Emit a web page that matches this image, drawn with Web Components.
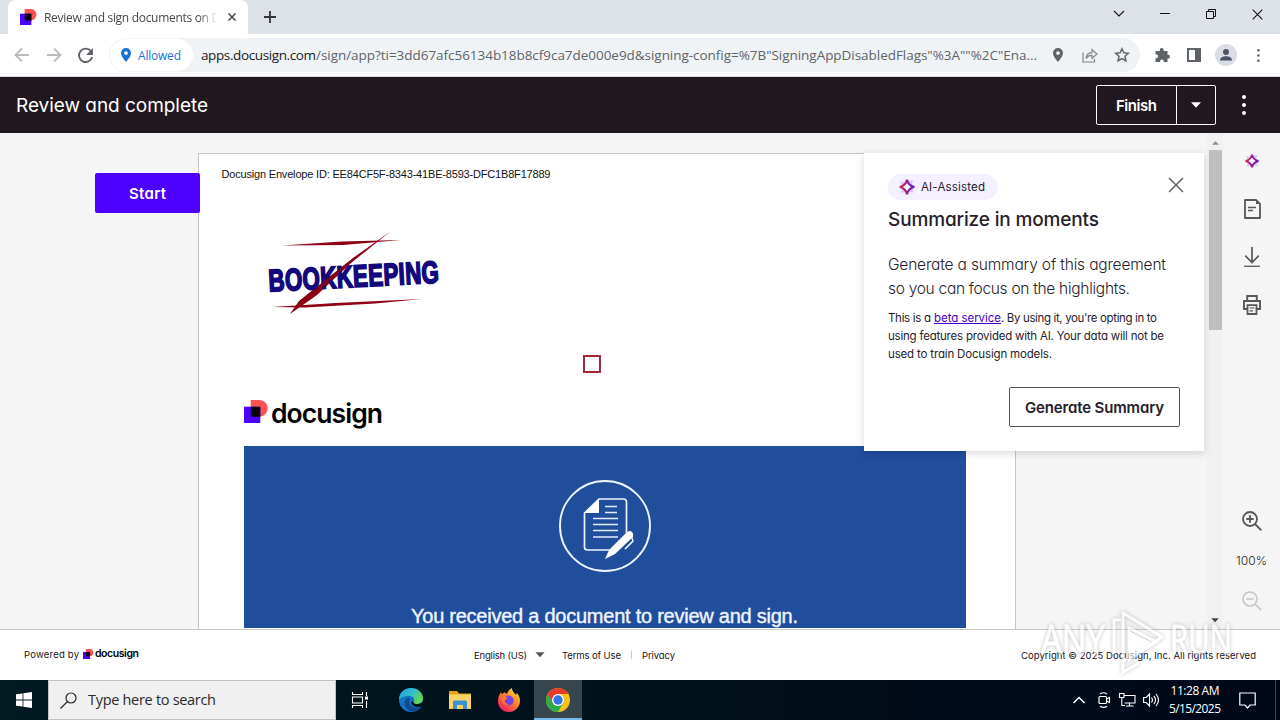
<!DOCTYPE html>
<html lang="en">
<head>
<meta charset="utf-8">
<title>Review and sign documents on Docusign</title>
<style>
    html, body { margin: 0; height: 100%; overflow: hidden; }
    body { font-family: Inter, "Liberation Sans", sans-serif; color: #1f1a20; }
</style>
</head>
<body>
<signing-screen></signing-screen>

<script>
const icons = {
    mark: ['0 0 24 24', `<path d="M7 0h8a8.500 8.500 0 0 1 2 17.300H7z" fill="#ff5252"/><path d="M0 7h17v17H0z" fill="#4c00ff"/><path d="M7 7h10v10.500H9a2 2 0 0 1-2-2z" fill="#0a0010"/>`],
    close: ['0 0 16 16', `<path d="M1 1l14 14M15 1L1 15" stroke="currentColor" stroke-width="var(--stroke,1.6)" fill="none"/>`],
    plus: ['0 0 12 12', `<path d="M6 0v12M0 6h12" stroke="currentColor" stroke-width="1.8"/>`],
    back: ['0 0 16 16', `<path d="M15 8H2M8 1.500L1.500 8 8 14.500" stroke="currentColor" stroke-width="1.8" fill="none"/>`],
    forward: ['0 0 16 16', `<path d="M1 8h13M8 1.500L14.500 8 8 14.500" stroke="currentColor" stroke-width="1.8" fill="none"/>`],
    reload: ['0 0 16 16', `<path d="M13.200 4A6.300 6.300 0 1 0 14.300 9.500" stroke="currentColor" stroke-width="1.8" fill="none"/><path d="M15 1v6.500H8.500z" fill="currentColor"/>`],
    pin: ['0 0 12 16', `<path fill-rule="evenodd" d="M6 1a5 5 0 0 1 5 5c0 3.500-5 9-5 9S1 9.500 1 6a5 5 0 0 1 5-5zm0 3.200a1.900 1.900 0 1 0 0 3.800 1.900 1.900 0 0 0 0-3.800z" fill="currentColor"/>`],
    share: ['0 0 16 16', `<path d="M1 5.500V15h11.500v-3M4 11.500C4.300 7.800 6.500 5.800 10 5.600V2.500L15 7l-5 4.500V8.300c-2.600 0-4.500.9-6 3.200z" stroke="currentColor" stroke-width="1.200" fill="none"/>`],
    star: ['0 0 16 16', `<path d="M8 1.800l1.900 4 4.400.5-3.300 3 .9 4.400L8 11.500l-3.900 2.200.9-4.400-3.300-3 4.400-.5z" stroke="currentColor" stroke-width="1.500" fill="none"/>`],
    puzzle: ['0 0 16 16', `<path d="M1.500 4h4.300V2.900a1.900 1.900 0 0 1 3.800 0V4h3.900v3.800h.6a1.900 1.900 0 0 1 0 3.800h-.6V15H9.700v-.8a1.800 1.800 0 0 0-3.600 0v.8H1.500v-3.800h.8a1.800 1.800 0 0 0 0-3.600h-.8z" fill="currentColor"/>`],
    panel: ['0 0 16 16', `<path fill-rule="evenodd" d="M1 1h14v14H1zm2 2v10h6V3z" fill="currentColor"/>`],
    person: ['0 0 22 22', `<circle cx="11" cy="11" r="11" fill="#dadde6"/><circle cx="11" cy="8" r="3" fill="#4d5467"/><path d="M5 16.500c0-3 3-4.200 6-4.200s6 1.200 6 4.200z" fill="#4d5467"/>`],
    dots: ['0 0 4 20', `<g fill="currentColor"><circle cx="2" cy="2" r="2"/><circle cx="2" cy="10" r="2"/><circle cx="2" cy="18" r="2"/></g>`],
    chevron: ['0 0 12 8', `<path d="M1 1l5 5 5-5" stroke="currentColor" stroke-width="1.100" fill="none"/>`],
    up: ['0 0 12 8', `<path d="M.5 7L6 1.500 11.500 7" stroke="currentColor" stroke-width="1.500" fill="none"/>`],
    dash: ['0 0 10 10', `<path d="M0 4.500h10" stroke="currentColor" stroke-width="1"/>`],
    restore: ['0 0 10 10', `<path d="M.5 2.500h7v7h-7zM2.500 2.500v-2h7v7h-2" stroke="currentColor" fill="none"/>`],
    caret: ['0 0 10 6', `<path d="M0 .3h10L5 5.700z" fill="currentColor"/>`],
    caretUp: ['0 0 10 6', `<path d="M0 5.700h10L5 .3z" fill="currentColor"/>`],
    spark: ['0 0 18 18', `<defs><linearGradient id="g"><stop offset="0" stop-color="#d02a4c"/><stop offset="1" stop-color="#5a16dc"/></linearGradient></defs><path d="M3 3l4 2 4-2 4-1-1 4 1 4 0 5-4-2-4 1-4 1 1-4z" fill="#d9c5f7"/><path d="M9 1.800c1 4.400 2.800 6.200 7.200 7.200-4.400 1-6.200 2.800-7.200 7.200C8 11.800 6.200 10 1.800 9 6.200 8 8 6.200 9 1.800z" stroke="url(#g)" stroke-width="2.200" fill="#fff"/>`],
    page: ['0 0 18 20', `<path d="M13 1H2v18h15V5z" stroke="currentColor" stroke-width="1.800" stroke-linejoin="round" fill="none"/><path d="M13 1v4h4z" fill="currentColor"/><path d="M5 8.500h8M5 11.500h5" stroke="currentColor" stroke-width="1.300"/>`],
    download: ['0 0 18 20', `<path d="M9 0v15M2.200 8.700L9 15.500l6.800-6.800" stroke="currentColor" stroke-width="1.700" fill="none"/><path d="M1 19.300h16" stroke="currentColor" stroke-width="1.300"/>`],
    print: ['0 0 18 20', `<path d="M4.200 5.500V1h9.600v4.500M4 14H1V6h16v8h-3" stroke="currentColor" stroke-width="1.900" fill="none"/><path d="M4.500 10.200h9V19h-9z" stroke="currentColor" stroke-width="1.800" fill="none"/><path d="M6.500 13h5M6.500 15.800h3.500" stroke="currentColor" stroke-width="1.200"/>`],
    zoomIn: ['0 0 20 20', `<circle cx="8" cy="8" r="7" stroke="currentColor" stroke-width="1.800" fill="none"/><path d="M13 13l6.300 6.300M4.300 8h7.400M8 4.300v7.400" stroke="currentColor" stroke-width="1.800"/>`],
    zoomOut: ['0 0 20 20', `<circle cx="8" cy="8" r="7" stroke="currentColor" stroke-width="1.600" fill="none"/><path d="M13 13l6.300 6.300M4.300 8h7.400" stroke="currentColor" stroke-width="1.600"/>`],
    bookkeeping: ['0 0 180 92', `<path d="M17 16.500L77 12.500l59-1.500-58 5z" fill="#8c0012"/><path d="M126 2L86 34 52 66 25 85l9-13L88 29z" fill="#8c0012"/><path d="M7 78l64-4 86-4-47 4.500-70 4z" fill="#8c0012"/><text transform="translate(4 62.500) rotate(-3) scale(.72 1)" textLength="237" font-family="'Liberation Sans'" font-weight="700" font-size="31" fill="#12077c" stroke="#12077c" stroke-width="1.800">BOOKKEEPING</text><path d="M94 25L54 62 37 75l23-24 13-10z" fill="#8c0012" opacity=".75"/>`],
    signDoc: ['0 0 92 92', `<circle cx="46" cy="46" r="45" stroke="#eef4ff" stroke-width="1.900" fill="none"/><path d="M52 70H28.500A3 3 0 0 1 25.500 67V33L40 19h24.500A3 3 0 0 1 67.500 22v31" stroke="#eef4ff" stroke-width="1.700" fill="none"/><path d="M26 33L40 19v14z" fill="#fff"/><path d="M46 26.500h12M46 32.500h12M34 38.500h25M34 44.500h25M34 50.500h25M34 57h25" stroke="#e4edff" stroke-width="1.500"/><path d="M46 79l4-9 18-18q3-2 5 0t1 5L56 74z" fill="#fff"/><path d="M66 69l8-8-1-3" stroke="#fff" stroke-width="1.500" fill="none"/>`],
    windows: ['0 0 16 16', `<path d="M0 2.300L6.600 1.400v6.200H0zM7.400 1.300L16 0v7.600H7.400zM0 8.400h6.600v6.200L0 13.700zM7.400 8.400H16V16l-8.600-1.300z" fill="#fff"/>`],
    search: ['0 0 17 17', `<circle cx="11" cy="6" r="5" stroke="currentColor" stroke-width="1.200" fill="none"/><path d="M7.500 9.500L.5 16.500" stroke="currentColor" stroke-width="1.300"/>`],
    taskview: ['0 0 16 16', `<path d="M.5 0v2.500h10V0M.5 16v-2.500h10V16M.5 5h10v6H.5zM14.500 0v4M14.500 9v7" stroke="#fff" fill="none" stroke-width="1.100"/><path d="M13 4.500h3v3h-3z" fill="#fff"/>`],
    edge: ['0 0 24 24', `<defs><linearGradient id="a" x2="1" y2=".5"><stop stop-color="#1d9de8"/><stop offset=".6" stop-color="#35c1c6"/><stop offset="1" stop-color="#68d64f"/></linearGradient></defs><circle cx="12" cy="12" r="12" fill="#1272c8"/><path d="M0 12C0 4 6 0 12 0c7 0 12 5 12 10 0 4-3 6-6 6-4 0-4-2-3-3 1-2-1-5-5-5C5 8 1 10 0 12z" fill="url(#a)"/><path d="M8.500 10C3 13 6 23 14 23.800 18 23.500 21 21 22.500 18.500 17 21 10 19 10 14c0-1.500.4-2.700 1.300-3.400z" fill="#114a8b"/><path d="M15 13c-1 1-1 3 3 3 3 0 5-1 6-3l1 4-2.500 1.500C18 20 12 18 12 14z" fill="#001419"/>`],
    folder: ['0 0 22 20', `<path d="M0 1h8l2 2.500h12V18H0z" fill="#eaa01d"/><path d="M0 4.500h22V19H0z" fill="#fbd467"/><path d="M4 19v-7q0-1.500 1.500-1.500h11q1.500 0 1.500 1.500v7h-4v-4H8v4z" fill="#3a92d2"/>`],
    firefox: ['0 0 24 24', `<defs><linearGradient id="a" x1="1" x2=".3" y2="1"><stop stop-color="#fff44f"/><stop offset=".45" stop-color="#ff9226"/><stop offset="1" stop-color="#f01d62"/></linearGradient></defs><path d="M12 24C5 24 1 19 1 13c0-4 1.500-7 3-9l1 2.500C6 5 7 4.500 8 4.500L10 6c1-3 3-5 5-6-.2 3 2 4 3 6l1.500 1V4.500C22 7 23 10 23 13c0 6-5 11-11 11z" fill="url(#a)"/><circle cx="11.700" cy="12.500" r="5" fill="#7542e5"/><path d="M5 9c2-1 4 0 6 1l-3 2c-1 2 1 4 4 4-4 3-8-1-7-7z" fill="#ff772b"/>`],
    chrome: ['0 0 24 24', `<circle cx="12" cy="12" r="12" fill="#fbc116"/><path d="M1.600 6A12 12 0 0 0 12 24l5.200-9L12 12 6.800 15z" fill="#2da94f"/><path d="M12 6h10.400a12 12 0 0 0-20.800 0l5.200 9z" fill="#e33b2e"/><circle cx="12" cy="12" r="6" fill="#fff"/><circle cx="12" cy="12" r="4.700" fill="#3076eb"/>`],
    camera: ['0 0 14 16', `<g stroke="#fff" fill="none" stroke-width="1.200"><rect x="2" y="4.500" width="7.500" height="7" rx="1"/><path d="M9.500 7l3-1.500v5l-3-1.500M3 2q3.500-2.500 7 0M3 14.200q3.500 2.500 7 0"/></g>`],
    network: ['0 0 17 16', `<g stroke="#fff" fill="none" stroke-width="1.100"><path d="M5.500 3.500H16v7.500H5.500M10.500 11v3M7 14h7.500M.5 1.500h4.500v4H.5zM2.800 5.500v8H6"/></g>`],
    volume: ['0 0 17 16', `<g stroke="#fff" fill="none" stroke-width="1.100"><path d="M.6 5.500h2.600L6.500 2v12L3.200 10.500H.6zM8.500 5.500q2 2.500 0 5M10.800 3.800q3.500 4.200 0 8.400M13 2q5 6 0 12"/></g>`],
    notice: ['0 0 17 17', `<path d="M.8 1h15.400v12H11l-2.500 3L6 13H.8z" stroke="#fff" fill="none" stroke-width="1.200"/>`]
};

class UiIcon extends HTMLElement {
    connectedCallback() {
        const [box, body] = icons[this.getAttribute('name')];
        const w = this.getAttribute('w');
        const h = this.getAttribute('h') || w;
        this.attachShadow({ mode: 'open' }).innerHTML = `
            <style>
                :host { display: block; flex: none; }
                svg { display: block; overflow: visible; }
            </style>
            <svg width="${w}" height="${h}" viewBox="${box}">${body}</svg>
        `;
    }
}

// One line of text, tracked out (or in) so that it spans the given width.
class FitText extends HTMLElement {
    connectedCallback() {
        this.attachShadow({ mode: 'open' }).innerHTML = `
            <style>
                :host { display: flex; flex: none; }
                span { flex: none; white-space: pre; }
            </style>
            <span><slot></slot></span>
        `;
        const width = Number(this.getAttribute('w'));
        const span = this.shadowRoot.querySelector('span');
        const natural = span.getBoundingClientRect().width;
        const count = this.textContent.length - 1;
        span.style.letterSpacing = (width - natural) / count + 'px';
        this.style.width = width + 'px';
    }
}

class BrowserChrome extends HTMLElement {
    connectedCallback() {
        this.attachShadow({ mode: 'open' }).innerHTML = `
            <style>
                :host { display: block; height: 77px; font: 12px "Open Sans", "Noto Sans", sans-serif; color: #5f6368; }
                .tabs { height: 34px; background: #dde1e8; display: flex; align-items: center; box-sizing: border-box; padding-left: 8px; }
                .tab { width: 240px; height: 34px; background: #fff; border-radius: 8px 8px 0 0; display: flex; align-items: center; box-sizing: border-box; padding: 0 12px; color: #45484c; }
                .title { width: 172px; margin: 0 12px 0 8px; overflow: hidden; -webkit-mask: linear-gradient(90deg, #000 155px, transparent 174px); mask: linear-gradient(90deg, #000 155px, transparent 174px); }
                .win { margin-left: auto; display: flex; align-items: center; padding-right: 17px; color: #111; }
                .bar { height: 43px; background: #fff; border-bottom: 1px solid #d8dadd; box-sizing: border-box; display: flex; align-items: center; padding-left: 14px; }
                .omni { width: 1031px; height: 34px; margin-left: 15px; border-radius: 17px; background: #f0f3f5; display: flex; align-items: center; font-size: 13.500px; }
                .allowed { width: 83px; height: 32px; border-radius: 16px; background: #fff; margin-left: 1px; display: flex; align-items: center; color: #1a6fd6; font-size: 12px; box-sizing: border-box; padding-left: 10px; gap: 6px; }
                .host { color: #202124; margin-left: 8px; }
            </style>
            <div class="tabs">
                <div class="tab">
                    <ui-icon name="mark" w="16"></ui-icon>
                    <div class="title"><fit-text w="217">Review and sign documents on Docusign</fit-text></div>
                    <ui-icon name="close" w="8" style="--stroke:3"></ui-icon>
                </div>
                <ui-icon name="plus" w="12" style="margin-left:16px;color:#333"></ui-icon>
                <div class="win" style="margin-top:-6px">
                    <ui-icon name="chevron" w="12" h="8" style="margin-right:35px"></ui-icon>
                    <ui-icon name="dash" w="10" style="margin-right:36px"></ui-icon>
                    <ui-icon name="restore" w="10" style="margin-right:36px"></ui-icon>
                    <ui-icon name="close" w="11"></ui-icon>
                </div>
            </div>
            <div class="bar">
                <ui-icon name="back" w="16" style="color:#b9bbbe"></ui-icon>
                <ui-icon name="forward" w="16" style="color:#b9bbbe;margin-left:16px"></ui-icon>
                <ui-icon name="reload" w="17" style="margin-left:15px"></ui-icon>
                <div class="omni">
                    <div class="allowed"><ui-icon name="pin" w="12" h="16"></ui-icon><fit-text w="43">Allowed</fit-text></div>
                    <fit-text class="host" w="115">apps.docusign.com</fit-text>
                    <fit-text w="721">/sign/app?ti=3dd67afc56134b18b8cf9ca7de000e9d&amp;signing-config=%7B"SigningAppDisabledFlags"%3A""%2C"Ena...</fit-text>
                    <ui-icon name="pin" w="12" h="16" style="margin-left:15px"></ui-icon>
                    <ui-icon name="share" w="16" style="margin-left:18px;color:#808488"></ui-icon>
                    <ui-icon name="star" w="16" style="margin-left:16px"></ui-icon>
                </div>
                <ui-icon name="puzzle" w="16" style="margin-left:14px"></ui-icon>
                <ui-icon name="panel" w="16" style="margin-left:16px"></ui-icon>
                <ui-icon name="person" w="22" style="margin-left:13px"></ui-icon>
                <ui-icon name="dots" w="2.800" h="13" style="margin-left:20px"></ui-icon>
            </div>
        `;
    }
}

class AppHeader extends HTMLElement {
    connectedCallback() {
        this.attachShadow({ mode: 'open' }).innerHTML = `
            <style>
                :host { display: flex; height: 56px; background: #21171e; color: #fff; align-items: center; padding: 0 34px 0 16px; font-size: 19px; }
                .finish { margin-left: auto; display: flex; width: 118px; height: 38px; border: 1px solid #fff; border-radius: 2px; align-items: center; font-size: 15px; font-weight: 600; }
                .label { width: 79px; display: flex; justify-content: center; }
                .arrow { width: 38px; height: 38px; border-left: 1px solid #fff; display: flex; align-items: center; justify-content: center; }
            </style>
            <fit-text w="192">Review and complete</fit-text>
            <div class="finish">
                <div class="label"><fit-text w="41">Finish</fit-text></div>
                <div class="arrow"><ui-icon name="caret" w="10" h="6"></ui-icon></div>
            </div>
            <ui-icon name="dots" w="4" h="20" style="margin-left:26px"></ui-icon>
        `;
    }
}

class DocumentPage extends HTMLElement {
    connectedCallback() {
        this.attachShadow({ mode: 'open' }).innerHTML = `
            <style>
                :host { display: flex; flex-direction: column; align-items: flex-start; width: 816px; height: 475px; margin-top: 20px; background: #fff; border: 1px solid #c6c6c6; border-bottom: 0; }
                .envelope { font: 11px/14px "Liberation Sans", sans-serif; color: #111; margin: 13px 0 0 22.500px; }
                .check { flex: none; width: 14px; height: 14px; border: 2px solid #a02638; margin: 34px 0 0 384px; }
                .brand { flex: none; display: flex; margin: 27px 0 0 45px; height: 46px; gap: 4px; color: #000; font-weight: 600; font-size: 26.500px; line-height: 27px; }
                .banner { flex: none; width: 722px; height: 182px; background: #204e9c; margin-left: 45px; display: flex; flex-direction: column; align-items: center; color: #eef4ff; font: 20px/24px "Liberation Sans", sans-serif; -webkit-text-stroke: .4px #eef4ff; }
            </style>
            <fit-text class="envelope" w="329">Docusign Envelope ID: EE84CF5F-8343-41BE-8593-DFC1B8F17889</fit-text>
            <ui-icon name="bookkeeping" w="180" h="92" style="margin:48px 0 0 66px"></ui-icon>
            <div class="check"></div>
            <div class="brand"><ui-icon name="mark" w="23"></ui-icon><fit-text w="112">docusign</fit-text></div>
            <div class="banner">
                <ui-icon name="signDoc" w="92" style="margin:34px 0 32px"></ui-icon>
                <fit-text w="387" style="margin-right:1px">You received a document to review and sign.</fit-text>
            </div>
        `;
    }
}

class SummaryCard extends HTMLElement {
    connectedCallback() {
        this.attachShadow({ mode: 'open' }).innerHTML = `
            <style>
                :host { display: block; box-sizing: border-box; width: 340px; height: 298px; padding: 21px 24px 24px; background: #fff; box-shadow: 0 2px 8px rgba(0, 0, 0, .16); color: #26212a; }
                .top { display: flex; justify-content: space-between; height: 26px; }
                .chip { display: flex; align-items: center; width: 110px; height: 26px; box-sizing: border-box; padding-left: 10px; gap: 5px; border-radius: 13px; background: #f5f0ff; font-size: 11.500px; }
                h2 { margin: 8px 0 21px; font-size: 19px; line-height: 24px; font-weight: 500; }
                .lead { font-size: 15.500px; line-height: 24px; font-weight: 300; }
                .note { font-size: 11.500px; line-height: 18px; margin-top: 8px; }
                .row { display: flex; }
                a { color: #4b00c8; text-decoration: underline; }
                .generate { width: 169px; height: 38px; border: 1px solid #55505a; border-radius: 2px; margin: 24px 0 0 auto; display: flex; align-items: center; justify-content: center; font-size: 15px; font-weight: 600; }
            </style>
            <div class="top">
                <div class="chip"><ui-icon name="spark" w="18"></ui-icon><fit-text w="64">AI-Assisted</fit-text></div>
                <ui-icon name="close" w="16" style="margin:3px -4px 0 0;color:#666"></ui-icon>
            </div>
            <h2><fit-text w="211">Summarize in moments</fit-text></h2>
            <div class="lead">
                <fit-text w="278">Generate a summary of this agreement</fit-text>
                <fit-text w="242">so you can focus on the highlights.</fit-text>
            </div>
            <div class="note">
                <div class="row"><fit-text w="46">This is a </fit-text><a><fit-text w="67">beta service</fit-text></a><fit-text w="156">. By using it, you're opting in to</fit-text></div>
                <fit-text w="276">using features provided with AI. Your data will not be</fit-text>
                <fit-text w="164">used to train Docusign models.</fit-text>
            </div>
            <div class="generate"><fit-text w="139">Generate Summary</fit-text></div>
        `;
    }
}

class DocumentArea extends HTMLElement {
    connectedCallback() {
        this.attachShadow({ mode: 'open' }).innerHTML = `
            <style>
                :host { display: flex; position: relative; height: 496px; background: #f5f5f5; overflow: hidden; }
                .gutter { width: 198px; flex: none; }
                .start { position: relative; z-index: 1; width: 105px; height: 40px; margin: 40px 0 0 95px; background: #4c00ff; border-radius: 2px; color: #fff; display: flex; align-items: center; justify-content: center; font-size: 15px; font-weight: 600; }
                .scroll { width: 16px; margin-left: auto; background: #f1f1f1; display: flex; flex-direction: column; align-items: center; color: #8a8a8a; }
                .thumb { width: 13px; height: 180px; background: #bfbfbf; margin-top: 5px; }
                .side { width: 57px; display: flex; flex-direction: column; align-items: center; color: #595559; font-size: 12px; box-sizing: border-box; padding-top: 20px; }
                summary-card { position: absolute; left: 864px; top: 20px; }
            </style>
            <div class="gutter"><div class="start"><fit-text w="37">Start</fit-text></div></div>
            <document-page></document-page>
            <div class="scroll">
                <ui-icon name="caretUp" w="7" h="4" style="margin-top:8px"></ui-icon>
                <div class="thumb"></div>
                <ui-icon name="caret" w="8" h="4.500" style="margin:auto 0 7px;color:#444"></ui-icon>
            </div>
            <div class="side">
                <ui-icon name="spark" w="16"></ui-icon>
                <ui-icon name="page" w="18" h="20" style="margin-top:30px"></ui-icon>
                <ui-icon name="download" w="18" h="20" style="margin-top:28px"></ui-icon>
                <ui-icon name="print" w="18" h="20" style="margin-top:28px"></ui-icon>
                <ui-icon name="zoomIn" w="20" style="margin-top:196px"></ui-icon>
                <fit-text w="31" style="margin:22px 0;font-weight:300;line-height:16px;color:#222">100%</fit-text>
                <ui-icon name="zoomOut" w="20" style="color:#c6c4c6"></ui-icon>
            </div>
            <summary-card></summary-card>
        `;
    }
}

class PageFooter extends HTMLElement {
    connectedCallback() {
        this.attachShadow({ mode: 'open' }).innerHTML = `
            <style>
                :host { display: flex; box-sizing: border-box; height: 51px; border-top: 1px solid #c9c9cb; background: #fff; align-items: center; padding: 0 24px; font-size: 9.500px; color: #19141c; }
                .brand { display: flex; align-items: center; gap: 2px; margin: -3px 0 0 4px; font-weight: 600; font-size: 10.500px; color: #000; }
                i { width: 1px; height: 8px; background: #ccc; margin: 0 10px; }
            </style>
            <fit-text w="55" style="margin-top:-2px">Powered by</fit-text>
            <div class="brand"><ui-icon name="mark" w="10"></ui-icon><fit-text w="44">docusign</fit-text></div>
            <fit-text w="53" style="margin-left:335px">English (US)</fit-text>
            <ui-icon name="caret" w="10" h="5.500" style="margin:0 17px 0 8px;color:#555"></ui-icon>
            <fit-text w="59">Terms of Use</fit-text><i></i><fit-text w="33">Privacy</fit-text>
            <fit-text w="235" style="margin-left:auto">Copyright © 2025 Docusign, Inc. All rights reserved</fit-text>
        `;
    }
}

class TaskBar extends HTMLElement {
    connectedCallback() {
        this.attachShadow({ mode: 'open' }).innerHTML = `
            <style>
                :host { display: flex; height: 40px; background: linear-gradient(90deg, #001a22, #001019 55%, #000719); align-items: center; color: #fff; font: 12px/18px "Open Sans", "Noto Sans", sans-serif; }
                .cell { width: 48px; height: 40px; display: flex; align-items: center; justify-content: center; box-sizing: border-box; }
                .search { width: 288px; height: 40px; box-sizing: border-box; border: 1px solid #c0c2c4; background: #f0f0f0; color: #2a2a2a; display: flex; align-items: center; gap: 11px; padding-left: 11px; font-size: 14.500px; }
                .apps { display: flex; gap: 1px; }
                .active { background: #37464d; border-bottom: 2px solid #76b9ed; padding-top: 2px; }
                .tray { margin-left: auto; display: flex; align-items: center; }
                .clock { width: 52px; margin: 0 18px 0 9px; display: flex; flex-direction: column; align-items: center; }
                .edge { width: 1px; height: 40px; margin: 0 4px 0 19px; background: #3b4554; }
            </style>
            <div class="cell"><ui-icon name="windows" w="16"></ui-icon></div>
            <div class="search"><ui-icon name="search" w="17"></ui-icon><fit-text w="128">Type here to search</fit-text></div>
            <div class="apps">
                <div class="cell" style="margin-right:2px"><ui-icon name="taskview" w="16"></ui-icon></div>
                <div class="cell"><ui-icon name="edge" w="24"></ui-icon></div>
                <div class="cell"><ui-icon name="folder" w="22" h="20"></ui-icon></div>
                <div class="cell"><ui-icon name="firefox" w="24"></ui-icon></div>
                <div class="cell active"><ui-icon name="chrome" w="24"></ui-icon></div>
            </div>
            <div class="tray">
                <ui-icon name="up" w="12" h="8" style="margin-right:12px"></ui-icon>
                <ui-icon name="camera" w="14" h="16" style="margin-right:8px"></ui-icon>
                <ui-icon name="network" w="17" h="16" style="margin-right:7px"></ui-icon>
                <ui-icon name="volume" w="17" h="16"></ui-icon>
                <div class="clock"><fit-text w="49">11:28 AM</fit-text><fit-text w="52">5/15/2025</fit-text></div>
                <ui-icon name="notice" w="17"></ui-icon>
                <div class="edge"></div>
            </div>
        `;
    }
}

class WaterMark extends HTMLElement {
    connectedCallback() {
        this.attachShadow({ mode: 'open' }).innerHTML = `
            <style>
                :host { display: block; pointer-events: none; opacity: .6; }
                svg { display: block; filter: drop-shadow(0 0 2px rgba(0, 0, 0, .4)); }
                text { font: 400 41px "Open Sans", sans-serif; fill: #fff; stroke: #fff; stroke-width: .8px; }
            </style>
            <svg width="210" height="76" viewBox="0 0 210 76">
                <text x="9" y="50" textLength="64" lengthAdjust="spacingAndGlyphs">ANY</text>
                <text x="138" y="50" textLength="62" lengthAdjust="spacingAndGlyphs">RUN</text>
                <path d="M91 55V9l39 24-39 24v11l16-9M82 50V16h7M97 24v32l27-18z" fill="none" stroke="#fff" stroke-width="3"/>
                <path d="M97 27l22 11-22 14z" fill="#fff"/>
            </svg>
        `;
    }
}

class SigningScreen extends HTMLElement {
    connectedCallback() {
        this.attachShadow({ mode: 'open' }).innerHTML = `
            <style>
                :host { display: flex; flex-direction: column; position: relative; width: 1280px; height: 720px; overflow: hidden; font-feature-settings: "cv11"; }
                water-mark { position: absolute; left: 1032px; top: 604px; }
            </style>
            <browser-chrome></browser-chrome>
            <app-header></app-header>
            <document-area></document-area>
            <page-footer></page-footer>
            <task-bar></task-bar>
            <water-mark></water-mark>
        `;
    }
}

customElements.define('ui-icon', UiIcon);
customElements.define('fit-text', FitText);
customElements.define('browser-chrome', BrowserChrome);
customElements.define('app-header', AppHeader);
customElements.define('document-page', DocumentPage);
customElements.define('summary-card', SummaryCard);
customElements.define('document-area', DocumentArea);
customElements.define('page-footer', PageFooter);
customElements.define('task-bar', TaskBar);
customElements.define('water-mark', WaterMark);
customElements.define('signing-screen', SigningScreen);
</script>
</body>
</html>
